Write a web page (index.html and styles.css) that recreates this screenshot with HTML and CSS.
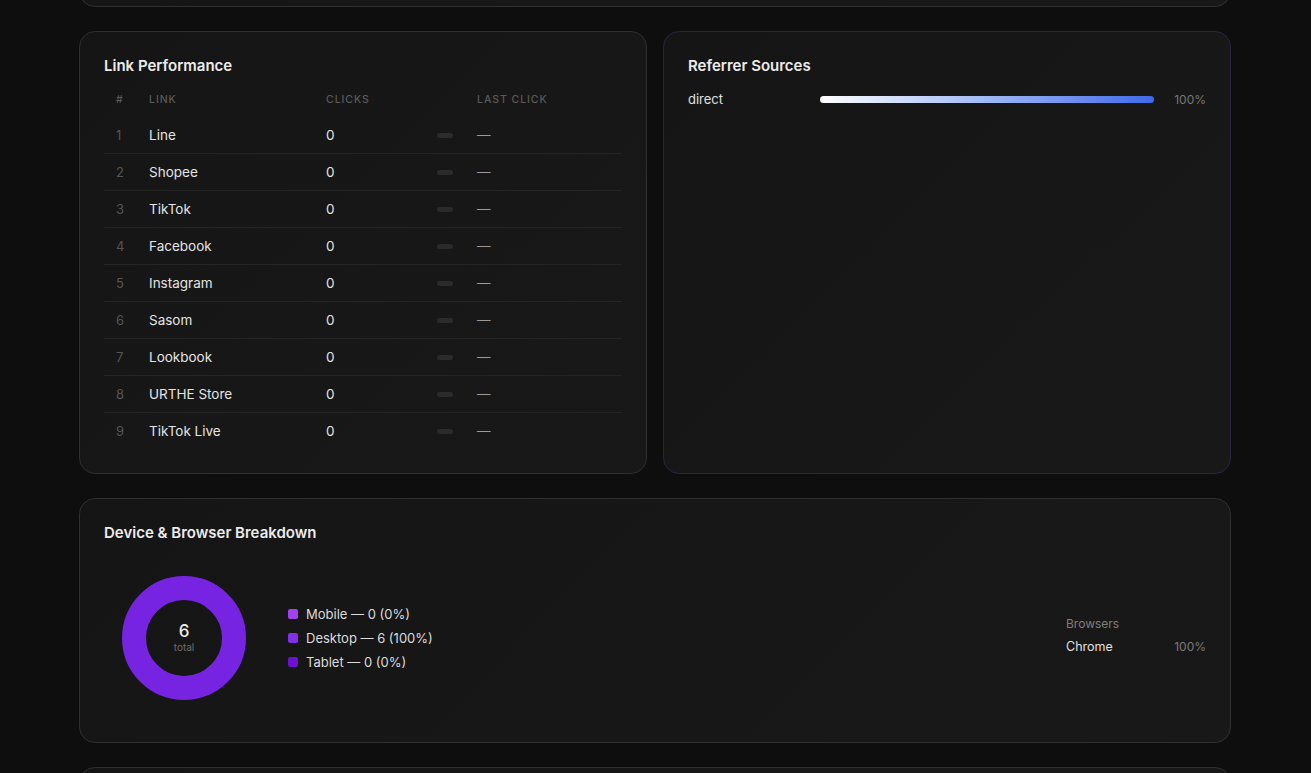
FILE: index.html
```html
<!DOCTYPE html>
<html>
<head>
<meta charset="utf-8">
<link rel="stylesheet" href="styles.css">
</head>
<body>
<main class="page">
  <section class="card card-top"></section>

  <div class="row-two">
    <section class="card card-links">
      <h2 class="card-title">Link Performance</h2>
      <div class="table">
        <div class="tr th">
          <span class="c-num">#</span><span class="c-link">Link</span><span class="c-clicks">Clicks</span><span class="c-bar"></span><span class="c-last">Last click</span>
        </div>
        <div class="tr"><span class="c-num">1</span><span class="c-link">Line</span><span class="c-clicks">0</span><span class="c-bar"><i class="pill"></i></span><span class="c-last">—</span></div>
        <div class="tr"><span class="c-num">2</span><span class="c-link">Shopee</span><span class="c-clicks">0</span><span class="c-bar"><i class="pill"></i></span><span class="c-last">—</span></div>
        <div class="tr"><span class="c-num">3</span><span class="c-link">TikTok</span><span class="c-clicks">0</span><span class="c-bar"><i class="pill"></i></span><span class="c-last">—</span></div>
        <div class="tr"><span class="c-num">4</span><span class="c-link">Facebook</span><span class="c-clicks">0</span><span class="c-bar"><i class="pill"></i></span><span class="c-last">—</span></div>
        <div class="tr"><span class="c-num">5</span><span class="c-link">Instagram</span><span class="c-clicks">0</span><span class="c-bar"><i class="pill"></i></span><span class="c-last">—</span></div>
        <div class="tr"><span class="c-num">6</span><span class="c-link">Sasom</span><span class="c-clicks">0</span><span class="c-bar"><i class="pill"></i></span><span class="c-last">—</span></div>
        <div class="tr"><span class="c-num">7</span><span class="c-link">Lookbook</span><span class="c-clicks">0</span><span class="c-bar"><i class="pill"></i></span><span class="c-last">—</span></div>
        <div class="tr"><span class="c-num">8</span><span class="c-link">URTHE Store</span><span class="c-clicks">0</span><span class="c-bar"><i class="pill"></i></span><span class="c-last">—</span></div>
        <div class="tr"><span class="c-num">9</span><span class="c-link">TikTok Live</span><span class="c-clicks">0</span><span class="c-bar"><i class="pill"></i></span><span class="c-last">—</span></div>
      </div>
    </section>

    <section class="card card-ref">
      <h2 class="card-title">Referrer Sources</h2>
      <div class="ref-row">
        <span class="ref-label">direct</span>
        <div class="ref-track"><div class="ref-fill" style="width:100%"></div></div>
        <span class="ref-pct">100%</span>
      </div>
    </section>
  </div>

  <section class="card card-device">
    <h2 class="card-title">Device &amp; Browser Breakdown</h2>
    <div class="device-body">
      <div class="donut">
        <div class="donut-center">
          <span class="donut-num">6</span>
          <span class="donut-lbl">total</span>
        </div>
      </div>
      <ul class="legend">
        <li><i class="sw sw-mobile"></i>Mobile — 0 (0%)</li>
        <li><i class="sw sw-desktop"></i>Desktop — 6 (100%)</li>
        <li><i class="sw sw-tablet"></i>Tablet — 0 (0%)</li>
      </ul>
      <div class="browsers">
        <div class="browsers-title">Browsers</div>
        <div class="browser-row"><span class="b-name">Chrome</span><span class="b-pct">100%</span></div>
      </div>
    </div>
  </section>

  <section class="card card-bottom"></section>
</main>
</body>
</html>
```

FILE: styles.css
```css
* { box-sizing: border-box; }

html, body {
  margin: 0;
  height: 100%;
  overflow: hidden;
}

body {
  background: #0e0e0e;
  font-family: Inter, "Noto Sans", "Liberation Sans", sans-serif;
  color: #e6e6e6;
}

.page {
  width: 1152px;
  margin: 0 0 0 79px;
  display: flex;
  flex-direction: column;
  gap: 24px;
}

.card {
  background: linear-gradient(135deg, #151515 0%, #171717 50%, #181818 100%);
  border: 1px solid #2f2f2f;
  border-radius: 16px;
  padding: 24px;
}

.card-top {
  height: 60px;
  margin-top: -53px;
  flex: none;
}

.card-bottom {
  height: 80px;
  flex: none;
}

.card-title {
  margin: 0 0 5px;
  font-size: 15px;
  line-height: 20px;
  font-weight: 600;
  color: #ececec;
}

.row-two {
  display: grid;
  grid-template-columns: 568px 568px;
  gap: 16px;
}

.card-links { height: 443px; }

.card-ref {
  height: 443px;
  border-color: #2c2440;
}

/* table */
.table { display: flex; flex-direction: column; }

.tr {
  display: grid;
  grid-template-columns: 45px 177px 111px 40px 1fr;
  align-items: center;
  height: 37px;
  border-bottom: 1px solid #242424;
  font-size: 13.5px;
  color: #e4e4e4;
}

.tr:last-child { border-bottom: none; height: 36px; }

.tr.th {
  height: 36px;
  border-bottom: none;
  font-size: 10.5px;
  letter-spacing: 0.09em;
  text-transform: uppercase;
  color: #5a5a5a;
  font-weight: 500;
}

.tr .c-num { padding-left: 12px; }
.tr:not(.th) .c-num { color: #555; font-size: 13px; }

.pill {
  display: block;
  width: 16px;
  height: 5px;
  border-radius: 3px;
  background: #2b2b2b;
}

.tr:not(.th) .c-last { color: #9a9a9a; }

/* referrer */
.ref-row {
  display: flex;
  align-items: center;
  height: 22px;
  margin-top: 12px;
}

.ref-label {
  width: 132px;
  font-size: 13px;
  color: #e0e0e0;
}

.ref-track {
  width: 334px;
  height: 7px;
  border-radius: 4px;
  background: #222;
}

.ref-fill {
  height: 100%;
  border-radius: 4px;
  background: linear-gradient(90deg, #ffffff 0%, #a9c0f7 45%, #4068ea 100%);
}

.ref-pct {
  margin-left: auto;
  font-size: 12px;
  color: #767676;
}

/* device */
.card-device { height: 245px; }

.device-body {
  display: flex;
  align-items: center;
  padding: 18px;
  margin-top: 15px;
}

.donut {
  width: 124px;
  height: 124px;
  border-radius: 50%;
  border: 24px solid #7723e2;
  display: flex;
  align-items: center;
  justify-content: center;
  flex: none;
}

.donut-center {
  display: flex;
  flex-direction: column;
  align-items: center;
  margin-top: -2px;
}

.donut-num {
  font-size: 17px;
  line-height: 20px;
  font-weight: 500;
  color: #ececec;
}

.donut-lbl {
  font-size: 10px;
  line-height: 12px;
  color: #6e6e6e;
}

.legend {
  list-style: none;
  margin: 0 0 0 42px;
  padding: 0;
  display: flex;
  flex-direction: column;
  gap: 6px;
}

.legend li {
  display: flex;
  align-items: center;
  font-size: 13px;
  line-height: 18px;
  color: #dcdcdc;
}

.sw {
  width: 10px;
  height: 10px;
  border-radius: 2px;
  margin-right: 8px;
}

.sw-mobile { background: #a042ee; }
.sw-desktop { background: #8230e6; }
.sw-tablet { background: #6a12cf; }

.browsers {
  margin-left: auto;
  margin-right: -18px;
  width: 140px;
  margin-top: -6px;
}

.browsers-title {
  font-size: 12px;
  line-height: 16px;
  color: #7e7e7e;
  margin-bottom: 7px;
}

.browser-row {
  display: flex;
  justify-content: space-between;
  font-size: 12.5px;
  line-height: 16px;
}

.b-name { color: #e0e0e0; }
.b-pct { color: #7a7a7a; font-size: 12px; }
```
